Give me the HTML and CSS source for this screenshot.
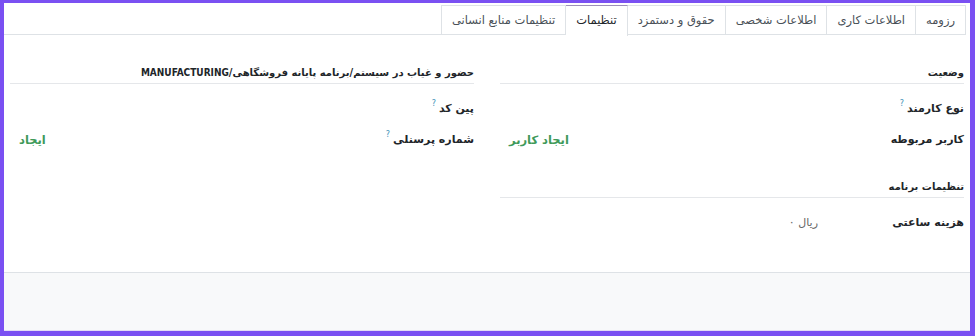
FILE: index.html
```html
<!DOCTYPE html>
<html lang="fa" dir="rtl">

<head>
    <meta charset="UTF-8">
    <title>تنظیمات کارمند</title>
    <link rel="stylesheet" href="styles.css">
</head>

<body>
    <div class="frame">
        <ul class="tabs">
            <li class="tab">رزومه</li>
            <li class="tab">اطلاعات کاری</li>
            <li class="tab">اطلاعات شخصی</li>
            <li class="tab">حقوق و دستمزد</li>
            <li class="tab active">تنظیمات</li>
            <li class="tab">تنظیمات منابع انسانی</li>
        </ul>

        <div class="sheet">
            <div class="col">
                <div class="group">
                    <div class="group-title">وضعیت</div>
                    <div class="row">
                        <label class="label">نوع کارمند<sup class="help">?</sup></label>
                        <div class="value"></div>
                    </div>
                    <div class="row">
                        <label class="label">کاربر مربوطه</label>
                        <div class="value"><a class="link">ایجاد کاربر</a></div>
                    </div>
                </div>
                <div class="group second">
                    <div class="group-title">تنظیمات برنامه</div>
                    <div class="row">
                        <label class="label">هزینه ساعتی</label>
                        <div class="value"><span class="money">ریال ۰</span></div>
                    </div>
                </div>
            </div>

            <div class="col">
                <div class="group">
                    <div class="group-title">حضور و غیاب در سیستم/برنامه پایانه فروشگاهی/<span class="latin">Manufacturing</span></div>
                    <div class="row">
                        <label class="label">پین کد<sup class="help">?</sup></label>
                        <div class="value"></div>
                    </div>
                    <div class="row">
                        <label class="label">شماره پرسنلی<sup class="help">?</sup></label>
                        <div class="value"><a class="link">ایجاد</a></div>
                    </div>
                </div>
            </div>
        </div>

        <div class="footer"></div>
    </div>
</body>

</html>
```

FILE: styles.css
```css
* {
    margin: 0;
    padding: 0;
    box-sizing: border-box;
}

body {
    width: 975px;
    height: 336px;
    font-family: "DejaVu Sans", "Noto Sans", sans-serif;
    font-size: 12px;
    color: #212529;
    background-color: #7a50f2;
}

.frame {
    display: flex;
    flex-direction: column;
    height: 328px;
    margin: 3px 5px 0 4px;
    background-color: white;
}

.tabs {
    display: flex;
    list-style: none;
    height: 32px;
    padding: 2px 0 0 0;
    margin-right: 4px;
    border-bottom: 1px solid #dee2e6;
}

.tab {
    height: 30px;
    line-height: 28px;
    padding: 0 10px;
    font-size: 11.5px;
    color: #495057;
    border: 1px solid #dee2e6;
    border-left: none;
    background-color: white;
}

.tab:last-child {
    border-left: 1px solid #dee2e6;
}

.tab.active {
    height: 31px;
    color: #212529;
    border-top: 1px solid #9d8fb8;
    border-bottom: none;
}

.sheet {
    display: grid;
    grid-template-columns: 1fr 1fr;
    column-gap: 26px;
    padding: 28px 6px 0 6px;
    flex: 1;
}

.group-title {
    height: 21px;
    line-height: 20px;
    font-size: 10px;
    font-weight: bold;
    border-bottom: 1px solid #e5e7ea;
}

.latin {
    font-family: "DejaVu Sans Condensed", "DejaVu Sans", sans-serif;
    text-transform: uppercase;
}

.group.second {
    margin-top: 22px;
}

.row {
    display: flex;
    align-items: center;
    height: 31px;
}

.group-title + .row {
    margin-top: 9px;
}

.label {
    width: 146px;
    flex-shrink: 0;
    line-height: 16px;
    font-size: 11px;
    font-weight: bold;
    white-space: nowrap;
}

.help {
    margin-right: 3px;
    line-height: 0;
    font-size: 8px;
    font-weight: normal;
    color: #3a8fb7;
    vertical-align: 6px;
}

.value {
    display: flex;
    flex: 1;
    padding: 0 0 0 9px;
}

.link {
    margin-right: auto;
    font-size: 11.5px;
    font-weight: bold;
    color: #3f9a5a;
}

.money {
    color: #666;
    font-size: 11px;
}

.footer {
    height: 59px;
    background-color: #f8f9fa;
    border-top: 1px solid #dee2e6;
    border-bottom: 1px solid #e3ddf5;
}
```
